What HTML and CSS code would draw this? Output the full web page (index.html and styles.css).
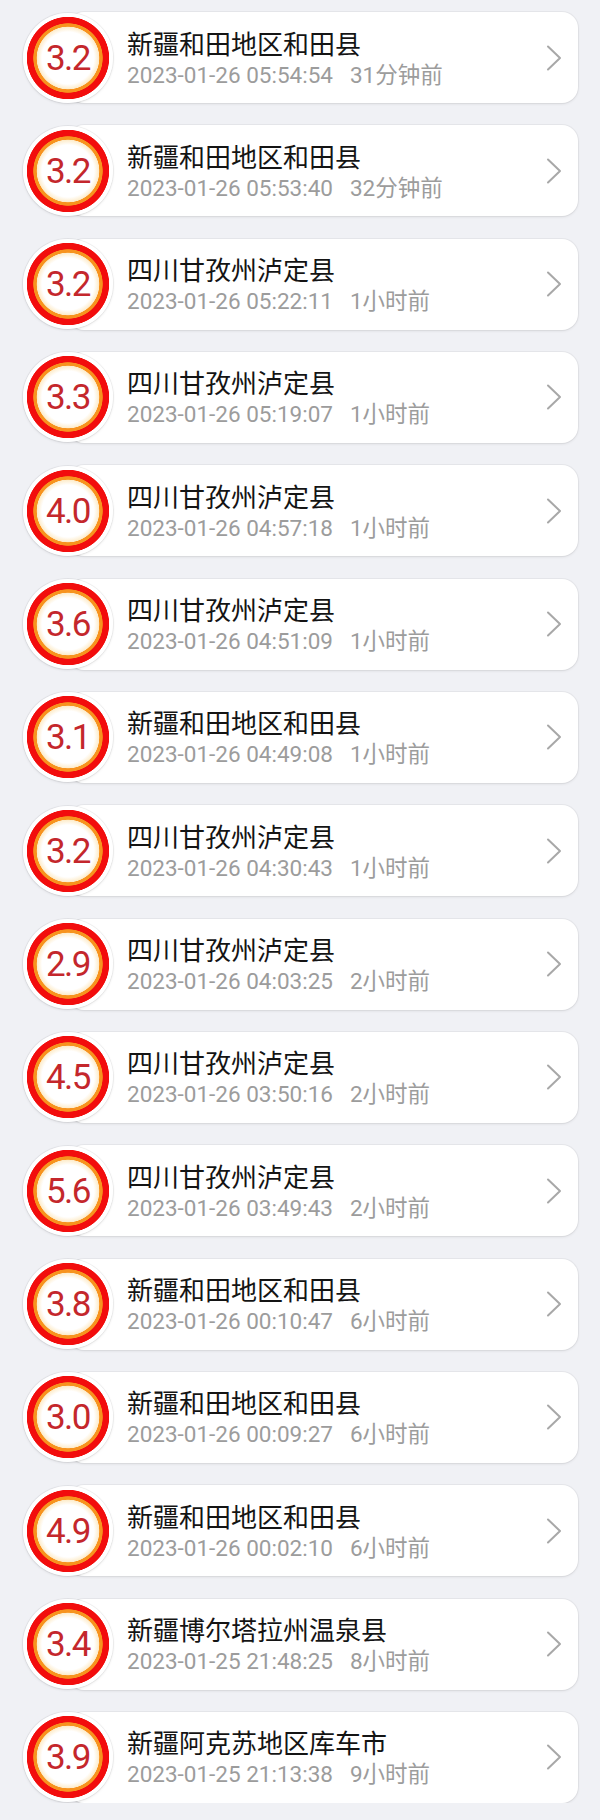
FILE: index.html
```html
<!DOCTYPE html>
<html lang="zh-CN">
<head>
<meta charset="utf-8">
<title>地震列表</title>
<link rel="stylesheet" href="styles.css">
</head>
<body>
<div class="list">
  <div class="row"><div class="mag">3.2</div><div class="card"><div class="info"><div class="place">新疆和田地区和田县</div><div class="meta"><span class="time">2023-01-26 05:54:54</span><span class="ago">31分钟前</span></div></div><svg class="chev" viewBox="0 0 16 26"><polyline points="2,1.5 14,13 2,24.5"/></svg></div></div>
  <div class="row"><div class="mag">3.2</div><div class="card"><div class="info"><div class="place">新疆和田地区和田县</div><div class="meta"><span class="time">2023-01-26 05:53:40</span><span class="ago">32分钟前</span></div></div><svg class="chev" viewBox="0 0 16 26"><polyline points="2,1.5 14,13 2,24.5"/></svg></div></div>
  <div class="row"><div class="mag">3.2</div><div class="card"><div class="info"><div class="place">四川甘孜州泸定县</div><div class="meta"><span class="time">2023-01-26 05:22:11</span><span class="ago">1小时前</span></div></div><svg class="chev" viewBox="0 0 16 26"><polyline points="2,1.5 14,13 2,24.5"/></svg></div></div>
  <div class="row"><div class="mag">3.3</div><div class="card"><div class="info"><div class="place">四川甘孜州泸定县</div><div class="meta"><span class="time">2023-01-26 05:19:07</span><span class="ago">1小时前</span></div></div><svg class="chev" viewBox="0 0 16 26"><polyline points="2,1.5 14,13 2,24.5"/></svg></div></div>
  <div class="row"><div class="mag">4.0</div><div class="card"><div class="info"><div class="place">四川甘孜州泸定县</div><div class="meta"><span class="time">2023-01-26 04:57:18</span><span class="ago">1小时前</span></div></div><svg class="chev" viewBox="0 0 16 26"><polyline points="2,1.5 14,13 2,24.5"/></svg></div></div>
  <div class="row"><div class="mag">3.6</div><div class="card"><div class="info"><div class="place">四川甘孜州泸定县</div><div class="meta"><span class="time">2023-01-26 04:51:09</span><span class="ago">1小时前</span></div></div><svg class="chev" viewBox="0 0 16 26"><polyline points="2,1.5 14,13 2,24.5"/></svg></div></div>
  <div class="row"><div class="mag">3.1</div><div class="card"><div class="info"><div class="place">新疆和田地区和田县</div><div class="meta"><span class="time">2023-01-26 04:49:08</span><span class="ago">1小时前</span></div></div><svg class="chev" viewBox="0 0 16 26"><polyline points="2,1.5 14,13 2,24.5"/></svg></div></div>
  <div class="row"><div class="mag">3.2</div><div class="card"><div class="info"><div class="place">四川甘孜州泸定县</div><div class="meta"><span class="time">2023-01-26 04:30:43</span><span class="ago">1小时前</span></div></div><svg class="chev" viewBox="0 0 16 26"><polyline points="2,1.5 14,13 2,24.5"/></svg></div></div>
  <div class="row"><div class="mag">2.9</div><div class="card"><div class="info"><div class="place">四川甘孜州泸定县</div><div class="meta"><span class="time">2023-01-26 04:03:25</span><span class="ago">2小时前</span></div></div><svg class="chev" viewBox="0 0 16 26"><polyline points="2,1.5 14,13 2,24.5"/></svg></div></div>
  <div class="row"><div class="mag">4.5</div><div class="card"><div class="info"><div class="place">四川甘孜州泸定县</div><div class="meta"><span class="time">2023-01-26 03:50:16</span><span class="ago">2小时前</span></div></div><svg class="chev" viewBox="0 0 16 26"><polyline points="2,1.5 14,13 2,24.5"/></svg></div></div>
  <div class="row"><div class="mag">5.6</div><div class="card"><div class="info"><div class="place">四川甘孜州泸定县</div><div class="meta"><span class="time">2023-01-26 03:49:43</span><span class="ago">2小时前</span></div></div><svg class="chev" viewBox="0 0 16 26"><polyline points="2,1.5 14,13 2,24.5"/></svg></div></div>
  <div class="row"><div class="mag">3.8</div><div class="card"><div class="info"><div class="place">新疆和田地区和田县</div><div class="meta"><span class="time">2023-01-26 00:10:47</span><span class="ago">6小时前</span></div></div><svg class="chev" viewBox="0 0 16 26"><polyline points="2,1.5 14,13 2,24.5"/></svg></div></div>
  <div class="row"><div class="mag">3.0</div><div class="card"><div class="info"><div class="place">新疆和田地区和田县</div><div class="meta"><span class="time">2023-01-26 00:09:27</span><span class="ago">6小时前</span></div></div><svg class="chev" viewBox="0 0 16 26"><polyline points="2,1.5 14,13 2,24.5"/></svg></div></div>
  <div class="row"><div class="mag">4.9</div><div class="card"><div class="info"><div class="place">新疆和田地区和田县</div><div class="meta"><span class="time">2023-01-26 00:02:10</span><span class="ago">6小时前</span></div></div><svg class="chev" viewBox="0 0 16 26"><polyline points="2,1.5 14,13 2,24.5"/></svg></div></div>
  <div class="row"><div class="mag">3.4</div><div class="card"><div class="info"><div class="place">新疆博尔塔拉州温泉县</div><div class="meta"><span class="time">2023-01-25 21:48:25</span><span class="ago">8小时前</span></div></div><svg class="chev" viewBox="0 0 16 26"><polyline points="2,1.5 14,13 2,24.5"/></svg></div></div>
  <div class="row"><div class="mag">3.9</div><div class="card"><div class="info"><div class="place">新疆阿克苏地区库车市</div><div class="meta"><span class="time">2023-01-25 21:13:38</span><span class="ago">9小时前</span></div></div><svg class="chev" viewBox="0 0 16 26"><polyline points="2,1.5 14,13 2,24.5"/></svg></div></div>
</div>
</body>
</html>
```
FILE: styles.css
```css
html, body {
  margin: 0;
  padding: 0;
  background: #f0f1f5;
}

body {
  font-family: Roboto, "Noto Sans CJK SC", sans-serif;
}

.list {
  display: flex;
  flex-direction: column;
  gap: 22.33px;
  padding: 12px 22px 0 23px;
}

.row {
  display: flex;
  align-items: center;
  height: 91px;
}

.mag {
  flex: none;
  position: relative;
  z-index: 1;
  width: 90px;
  height: 90px;
  border-radius: 50%;
  display: flex;
  align-items: center;
  justify-content: center;
  background: radial-gradient(circle closest-side,
    #ffffff 0, #ffffff 26px, #fdeccb 31px,
    #f7931e 31.6px, #f7931e 34.4px,
    #f20d0d 35px, #f20d0d 40.8px,
    #ffffff 41.5px);
  box-shadow: 0 0 0 1px rgba(0, 0, 0, 0.05), 0 1px 3px rgba(0, 0, 0, 0.1);
  color: #c4272c;
  font-family: Roboto, sans-serif;
  font-size: 35px;
  letter-spacing: -1.5px;
  line-height: 1;
  padding-top: 1px;
  box-sizing: border-box;
}

.card {
  flex: 1;
  height: 91px;
  margin-left: -45px;
  padding: 0 16px 0 59px;
  background: #ffffff;
  border-radius: 16px;
  box-shadow: 0 0 0 1px rgba(0, 0, 0, 0.035), 0 1px 3px rgba(0, 0, 0, 0.09);
  display: flex;
  align-items: center;
  box-sizing: border-box;
}

.info {
  flex: 1;
  display: flex;
  flex-direction: column;
  padding-top: 2px;
}

.place {
  font-family: "Noto Sans CJK SC", sans-serif;
  font-size: 26px;
  line-height: 32px;
  color: #141414;
}

.meta {
  display: flex;
  font-size: 22.5px;
  line-height: 32px;
  color: #9c9c9c;
}

.ago {
  margin-left: 17px;
}

.chev {
  flex: none;
  width: 16px;
  height: 26px;
  fill: none;
  stroke: #a8a8a8;
  stroke-width: 2;
  stroke-linecap: round;
  stroke-linejoin: round;
}
```
